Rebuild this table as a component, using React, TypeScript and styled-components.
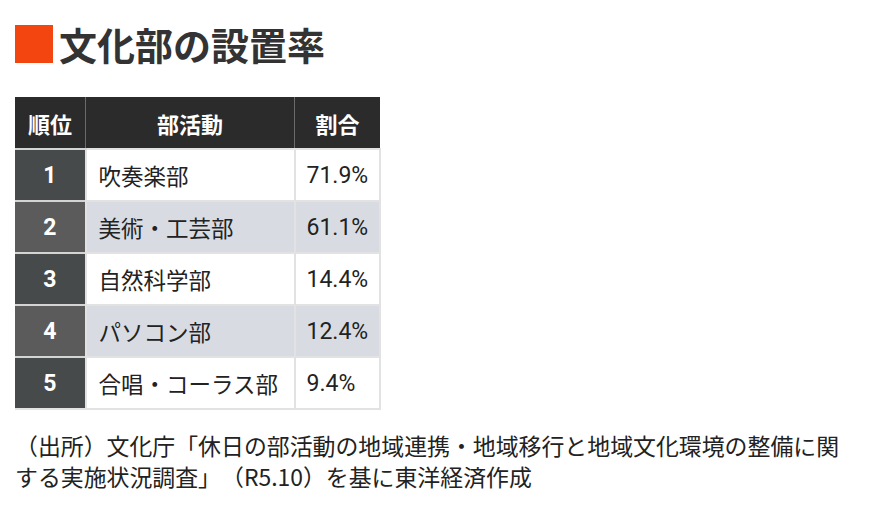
import styled, { createGlobalStyle } from 'styled-components';

const GlobalStyle = createGlobalStyle`
  html, body {
    margin: 0;
    padding: 0;
    background: #ffffff;
  }
  body {
    font-family: Roboto, "Noto Sans CJK JP", sans-serif;
    color: #222222;
    text-spacing-trim: space-all;
  }
`;

const Page = styled.div`
  width: 870px;
  height: 506px;
  padding: 25px 15px 0;
  box-sizing: border-box;
  overflow: hidden;
`;

const TitleRow = styled.div`
  display: flex;
  align-items: center;
  gap: 6px;
  height: 38px;
`;

const Marker = styled.span`
  width: 38px;
  height: 38px;
  background: #f2450f;
  flex-shrink: 0;
`;

const Title = styled.h1`
  margin: 0;
  font-family: "Noto Sans CJK JP", sans-serif;
  font-size: 38px;
  line-height: 38px;
  font-weight: 700;
  color: #333333;
`;

const Table = styled.table`
  margin-top: 34px;
  border-collapse: collapse;
  width: 363px;
  table-layout: fixed;
`;

const HeadCell = styled.th<{ $w: number }>`
  width: ${p => p.$w}px;
  height: 51px;
  padding: 0;
  background: #2b2b2b;
  color: #ffffff;
  font-family: "Noto Sans CJK JP", sans-serif;
  font-size: 22px;
  font-weight: 700;
  text-align: center;
  border-left: 1px solid #6a6a6a;
  &:first-child {
    border-left: none;
  }
`;

const Row = styled.tr<{ $even: boolean }>`
  height: 52px;
  background: ${p => (p.$even ? '#d8dce2' : '#ffffff')};
`;

const RankCell = styled.td<{ $even: boolean }>`
  padding: 0;
  background: ${p => (p.$even ? '#5b5b5b' : '#474a4b')};
  color: #ffffff;
  font-family: Roboto, sans-serif;
  font-size: 23px;
  font-weight: 700;
  text-align: center;
  border-top: 2px solid #d4d4d4;
`;

const TextCell = styled.td`
  padding: 0 0 0 12px;
  font-family: "Noto Sans CJK JP", sans-serif;
  font-size: 22.5px;
  color: #222222;
  border-top: 2px solid #e2e2e2;
  border-left: 2px solid #e2e2e2;
  white-space: nowrap;
`;

const RateCell = styled.td`
  padding: 0 0 0 11px;
  font-family: Roboto, sans-serif;
  font-size: 23px;
  color: #222222;
  border-top: 2px solid #e2e2e2;
  border-left: 2px solid #e2e2e2;
  border-right: 2px solid #e2e2e2;
`;

const LastRow = styled(Row)`
  td {
    border-bottom: 2px solid #e2e2e2;
  }
`;

const Note = styled.p`
  margin: 20px 0 0;
  font-family: "Noto Sans CJK JP", sans-serif;
  font-size: 22.9px;
  line-height: 31px;
  color: #222222;
  width: 840px;
`;

const rows = [
  { rank: 1, name: '吹奏楽部', rate: '71.9%' },
  { rank: 2, name: '美術・工芸部', rate: '61.1%' },
  { rank: 3, name: '自然科学部', rate: '14.4%' },
  { rank: 4, name: 'パソコン部', rate: '12.4%' },
  { rank: 5, name: '合唱・コーラス部', rate: '9.4%' },
];

export default function App() {
  return (
    <Page>
      <GlobalStyle />
      <TitleRow>
        <Marker />
        <Title>文化部の設置率</Title>
      </TitleRow>

      <Table>
        <thead>
          <tr>
            <HeadCell $w={70}>順位</HeadCell>
            <HeadCell $w={208}>部活動</HeadCell>
            <HeadCell $w={85}>割合</HeadCell>
          </tr>
        </thead>
        <tbody>
          {rows.map((r, i) => {
            const even = i % 2 === 1;
            const R = i === rows.length - 1 ? LastRow : Row;
            return (
              <R key={r.rank} $even={even}>
                <RankCell $even={even}>{r.rank}</RankCell>
                <TextCell>{r.name}</TextCell>
                <RateCell>{r.rate}</RateCell>
              </R>
            );
          })}
        </tbody>
      </Table>

      <Note>
        （出所）文化庁「休日の部活動の地域連携・地域移行と地域文化環境の整備に関する実施状況調査」（R5.10）を基に東洋経済作成
      </Note>
    </Page>
  );
}
